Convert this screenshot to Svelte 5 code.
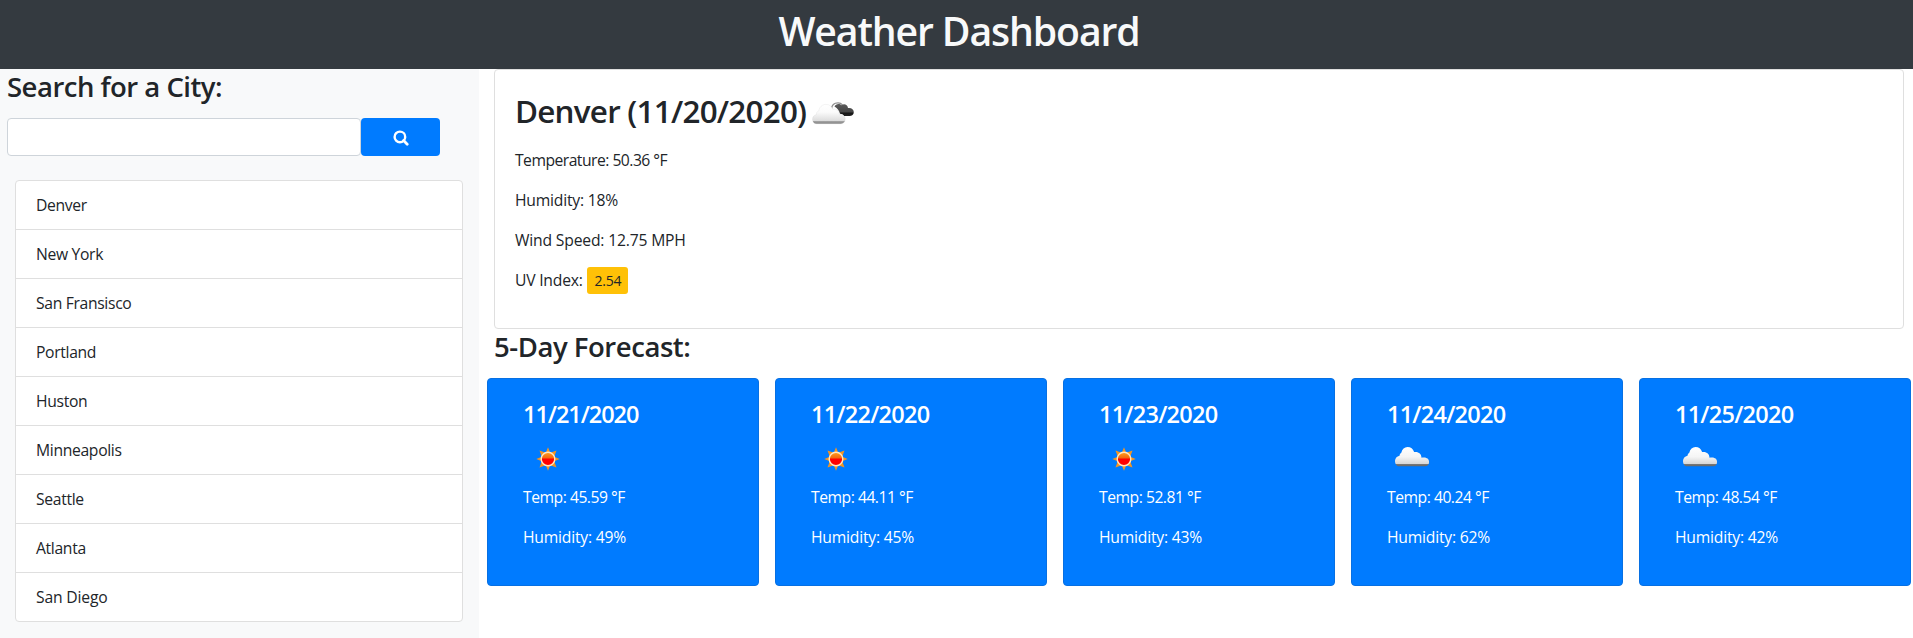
<script>
  const cities = ['Denver', 'New York', 'San Fransisco', 'Portland', 'Huston', 'Minneapolis', 'Seattle', 'Atlanta', 'San Diego'];
  const days = [
    { date: '11/21/2020', icon: 'sun', temp: '45.59', humidity: 49 },
    { date: '11/22/2020', icon: 'sun', temp: '44.11', humidity: 45 },
    { date: '11/23/2020', icon: 'sun', temp: '52.81', humidity: 43 },
    { date: '11/24/2020', icon: 'cloud', temp: '40.24', humidity: 62 },
    { date: '11/25/2020', icon: 'cloud', temp: '48.54', humidity: 42 }
  ];
</script>

<header><h1>Weather Dashboard</h1></header>
<div class="layout">
  <aside>
    <h3>Search for a City:</h3>
    <form class="search">
      <input type="text" aria-label="City" />
      <button type="button" aria-label="Search">
        <svg width="16" height="16" viewBox="0 0 16 16"><circle cx="6.9" cy="6.9" r="5.3" fill="none" stroke="#fff" stroke-width="2.4" /><path d="M10.600 10.600 14.200 14.200" stroke="#fff" stroke-width="2.800" stroke-linecap="round" /></svg>
      </button>
    </form>
    <ul>
      {#each cities as city}<li>{city}</li>{/each}
    </ul>
  </aside>
  <main>
    <section class="current">
      <h2>Denver (11/20/2020)
        <svg width="50" height="50" viewBox="0 0 50 50">
          <defs>
            <linearGradient id="dark" x1="0" y1="0" x2="0" y2="1"><stop offset="0" stop-color="#5c5c5c" /><stop offset=".68" stop-color="#454545" /><stop offset=".74" stop-color="#141414" /><stop offset="1" stop-color="#222" /></linearGradient>
            <linearGradient id="light" x1="0" y1="0" x2="0" y2="1"><stop offset="0" stop-color="#fff" /><stop offset=".4" stop-color="#fbfbfb" /><stop offset=".85" stop-color="#dcdcdc" /><stop offset=".89" stop-color="#9a9a9a" /><stop offset="1" stop-color="#8a8a8a" /></linearGradient>
          </defs>
          <path d="M23.500 20c.2-3.500 2.500-6.200 6.500-6.200 2 0 3.500.8 4.500 2" fill="none" stroke="#8e8e8e" stroke-width="1.200" />
          <path d="M26.500 17.500c1-2.700 5-3.500 7-1.300 2.600-1.800 6-.6 6.500 2.800 3.200-.6 5.800 1.200 5.800 4 0 2.400-1.800 4-4.300 4h-5.500c-.8-1.400-2.300-2.200-4-2.200-.6-3-2.400-5.500-5.500-7.300z" fill="url(#dark)" />
          <path d="M8.500 34.700c-2.500 0-4-2-4-4.500 0-2.400 1.600-4.300 4-4.700-.2-1.800.7-3.200 2.300-3.600.4-3.800 3.400-6.500 7.200-6.500 3.400 0 6 2 6.800 5 3.700-1 6.400 1.400 6.700 5.200 3.400-.6 5.800 1.400 5.800 4.500 0 2.700-1.700 4.600-4.300 4.600z" fill="url(#light)" stroke="#777" stroke-opacity=".12" stroke-width=".7" />
        </svg>
      </h2>
      <p class="temperature">Temperature: 50.36 °F</p>
      <p>Humidity: 18%</p>
      <p class="wind">Wind Speed: 12.75 MPH</p>
      <p>UV Index: <span class="uv">2.54</span></p>
    </section>
    <h3 class="forecast-title">5-Day Forecast:</h3>
    <section class="forecast">
      {#each days as day}
        <article>
          <h4>{day.date}</h4>
          {#if day.icon === 'sun'}
            <svg width="50" height="50" viewBox="0 0 50 50">
              <defs><linearGradient id="sun" x1="0" y1="0" x2="0" y2="1"><stop offset="0" stop-color="#ffa01d" /><stop offset=".4" stop-color="#f36a10" /><stop offset=".52" stop-color="#f00" /><stop offset="1" stop-color="#f00" /></linearGradient></defs>
              <path d="M25 13.300l2.200 5.500 6.300-2.300-2.300 6.300 5.500 2.200-5.500 2.200 2.300 6.300-6.300-2.300-2.200 5.500-2.200-5.500-6.300 2.300 2.300-6.300-5.500-2.200 5.500-2.200-2.300-6.300 6.300 2.300z" fill="#f29423" />
              <circle cx="25" cy="25" r="6.800" fill="url(#sun)" stroke="#ffe8c4" stroke-width="1.400" />
            </svg>
          {:else}
            <svg width="50" height="50" viewBox="0 0 50 50">
              <defs><linearGradient id="cloud" x1="0" y1="0" x2="0" y2="1"><stop offset="0" stop-color="#fff" /><stop offset=".5" stop-color="#f5f5f5" /><stop offset=".86" stop-color="#d8d8d8" /><stop offset=".9" stop-color="#777" /><stop offset="1" stop-color="#666" /></linearGradient></defs>
              <path d="M12.300 32.300c-2.700 0-4.300-2.300-4.300-5.300 0-2.500 1.900-4.700 4.500-5.200.2-1.300.8-2.400 1.800-3 .8-3.600 3.200-5.700 6.200-5.700 3.200 0 5.700 1.900 6.600 5 4.200-.8 7.200 1.500 7.400 5.600 4.400-.8 7.600.7 7.600 4.200 0 2.500-1.600 4.400-4.300 4.400z" fill="url(#cloud)" />
            </svg>
          {/if}
          <p class="temp">Temp: {day.temp} °F</p>
          <p>Humidity: {day.humidity}%</p>
        </article>
      {/each}
    </section>
  </main>
</div>

<style>
  :global(body) { margin: 0; background: #fff; color: #212529; font: 400 15.7px/24px "Open Sans", "Noto Sans", sans-serif; }
  :global(*) { box-sizing: border-box; }
  h1, h2, h3, h4, p, ul { margin: 0; font-weight: 600; }
  header { height: 69px; padding: 7px 0 0 5px; background: #343a40; color: #f8f9fa; text-align: center; }
  h1 { font-size: 39.2px; line-height: 48px; letter-spacing: -1.12px; }
  .layout { display: flex; }
  aside { flex: none; width: 479px; height: 569px; padding: 0 16px 0 7px; background: #f8f9fa; }
  h3 { padding-top: 1px; font-size: 27.5px; line-height: 34px; letter-spacing: -.5px; }
  .search { display: flex; height: 38px; margin: 14px 0 24px; }
  input { width: 354px; border: 1px solid #ced4da; border-radius: 4px; background: #fff; }
  button { display: flex; width: 79px; padding: 1px 0 0; border: 0; border-radius: 4px; background: #007bff; align-items: center; justify-content: center; }
  ul { margin-left: 8px; padding: 0; list-style: none; border: 1px solid #dfdfdf; border-radius: 4px; background: #fff; }
  li { height: 49px; padding: 12px 20px; font-weight: 400; letter-spacing: -.33px; }
  li:first-child { height: 48px; }
  li:last-child { letter-spacing: -.18px; }
  li + li { border-top: 1px solid #dfdfdf; }
  main { flex: 1; padding: 0 9px 0 15px; }
  .current { height: 260px; padding: 20px; border: 1px solid #dfdfdf; border-radius: 4px; }
  h2 { display: flex; height: 50px; margin-bottom: 8px; align-items: flex-start; font-size: 31.4px; line-height: 42px; letter-spacing: -.75px; }
  h2 svg { margin: -1px 0 0 2px; }
  p { height: 24px; margin-bottom: 16px; font-weight: 400; letter-spacing: -.22px; }
  .temperature { letter-spacing: -.52px; }
  .wind { letter-spacing: -.18px; }
  .uv { display: inline-block; height: 27px; margin: -3px 0 0 1px; padding: 0 7px; border-radius: 3px; background: #ffc107; font-size: 14px; line-height: 27px; }
  .forecast-title { margin: 0 0 14px; letter-spacing: -.45px; }
  .forecast { display: flex; margin: 0 -8px 0 -7px; gap: 16px; }
  article { flex: none; width: 272px; height: 208px; padding: 21px 35px; border: 1px solid #0770e3; border-radius: 4px; background: #007bff; color: #fff; }
  h4 { margin-bottom: 5px; font-size: 23.5px; line-height: 29px; letter-spacing: -.75px; }
  article:first-child h4 { letter-spacing: -1.05px; }
  article svg { display: block; margin-bottom: 1px; }
  .temp { letter-spacing: -.48px; }
</style>
